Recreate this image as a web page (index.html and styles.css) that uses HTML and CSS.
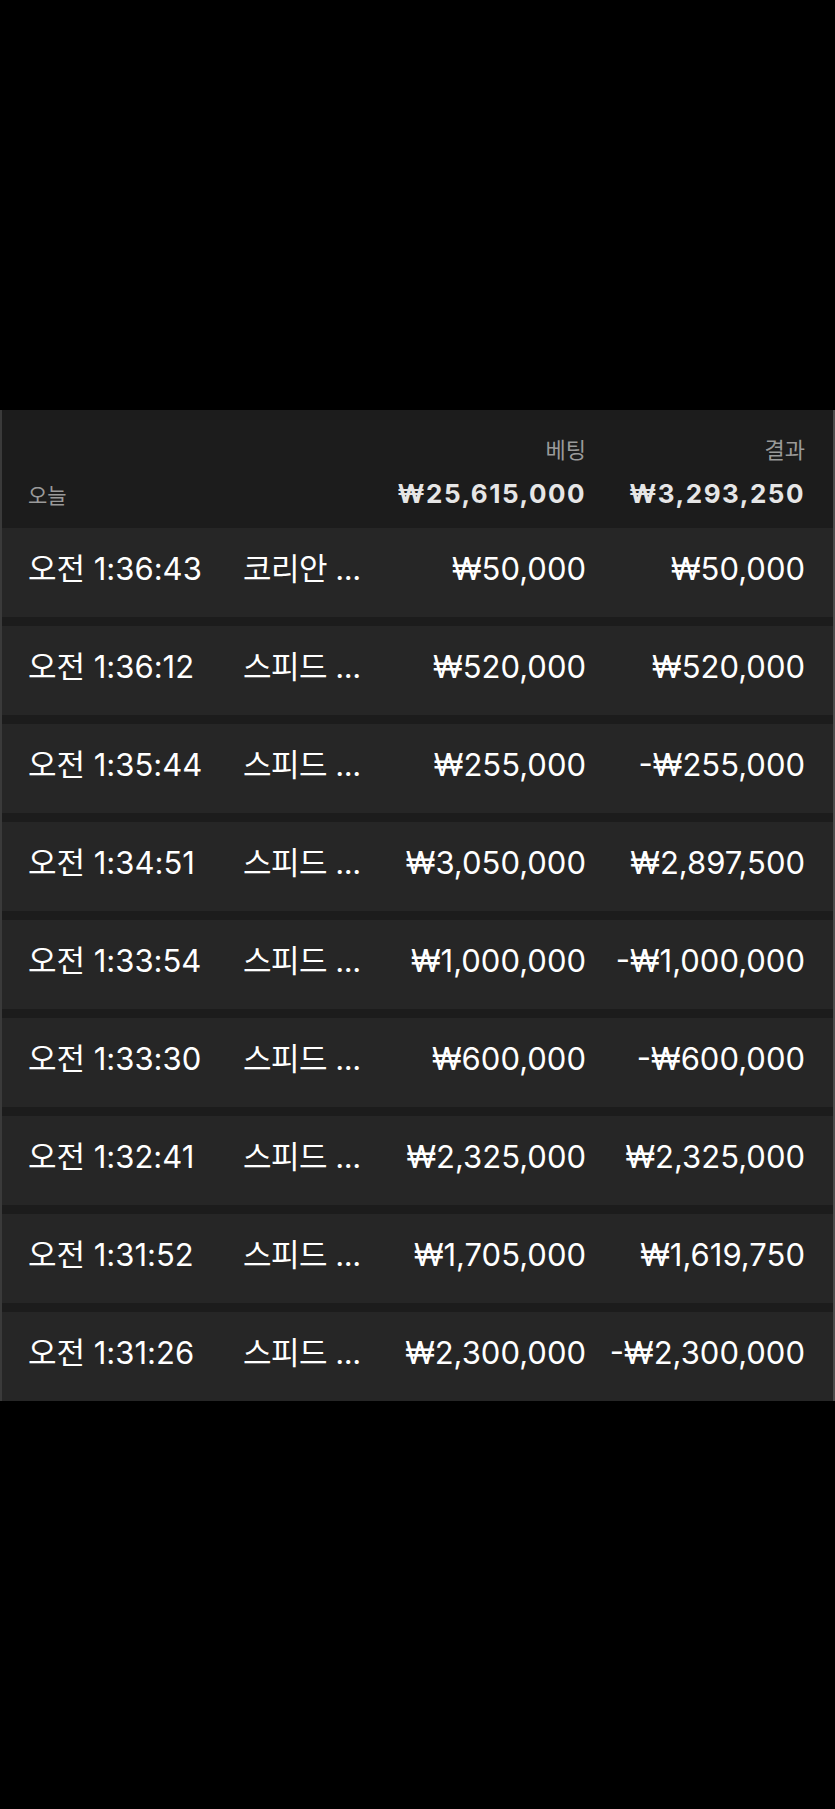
FILE: index.html
```html
<!DOCTYPE html>
<html lang="ko">
<head>
  <meta charset="UTF-8" />
  <title>베팅 내역</title>
  <link rel="stylesheet" href="styles.css">
</head>
<body>

  <div class="history">
    <div class="summary">
      <span></span>
      <span></span>
      <span class="label">베팅</span>
      <span class="label">결과</span>
      <span class="day">오늘</span>
      <span></span>
      <span class="total">₩25,615,000</span>
      <span class="total">₩3,293,250</span>
    </div>

    <div class="rows">
      <div class="row"><span class="time">오전 1:36:43</span><span class="game">코리안 ...</span><span class="amount">₩50,000</span><span class="amount">₩50,000</span></div>
      <div class="row"><span class="time">오전 1:36:12</span><span class="game">스피드 ...</span><span class="amount">₩520,000</span><span class="amount">₩520,000</span></div>
      <div class="row"><span class="time">오전 1:35:44</span><span class="game">스피드 ...</span><span class="amount">₩255,000</span><span class="amount">-₩255,000</span></div>
      <div class="row"><span class="time">오전 1:34:51</span><span class="game">스피드 ...</span><span class="amount">₩3,050,000</span><span class="amount">₩2,897,500</span></div>
      <div class="row"><span class="time">오전 1:33:54</span><span class="game">스피드 ...</span><span class="amount">₩1,000,000</span><span class="amount">-₩1,000,000</span></div>
      <div class="row"><span class="time">오전 1:33:30</span><span class="game">스피드 ...</span><span class="amount">₩600,000</span><span class="amount">-₩600,000</span></div>
      <div class="row"><span class="time">오전 1:32:41</span><span class="game">스피드 ...</span><span class="amount">₩2,325,000</span><span class="amount">₩2,325,000</span></div>
      <div class="row"><span class="time">오전 1:31:52</span><span class="game">스피드 ...</span><span class="amount">₩1,705,000</span><span class="amount">₩1,619,750</span></div>
      <div class="row"><span class="time">오전 1:31:26</span><span class="game">스피드 ...</span><span class="amount">₩2,300,000</span><span class="amount">-₩2,300,000</span></div>
    </div>
  </div>

</body>
</html>
```

FILE: styles.css
```css
body {
  margin: 0;
  background: #000;
  font-family: Inter, "Noto Sans CJK KR", sans-serif;
  color: #fff;
}

.history {
  margin-top: 410px;
  background: #1c1c1c;
  border-left: 2px solid #3a3a3a;
  border-right: 2px solid #4c4c4c;
}

.summary,
.row {
  display: grid;
  grid-template-columns: 215px 1fr 220px 219px;
  padding: 0 28px 0 26px;
}

.summary {
  padding-top: 27px;
  padding-bottom: 16px;
  row-gap: 15px;
  align-items: baseline;
}

.label {
  text-align: right;
  color: #9a9a9a;
  font-size: 22px;
  line-height: 26px;
}

.day {
  color: #9a9a9a;
  font-size: 21px;
  line-height: 32px;
}

.total {
  text-align: right;
  color: #e6e6e6;
  font-size: 26px;
  line-height: 32px;
  font-weight: 700;
  letter-spacing: 1.5px;
}

.rows {
  display: flex;
  flex-direction: column;
  gap: 9px;
}

.row {
  box-sizing: border-box;
  height: 89px;
  padding-bottom: 8px;
  align-items: center;
  background: #262626;
  font-size: 31px;
  line-height: 36px;
}

.time {
  white-space: nowrap;
}

.game {
  white-space: nowrap;
  letter-spacing: -0.5px;
}

.amount {
  text-align: right;
  white-space: nowrap;
}
```
